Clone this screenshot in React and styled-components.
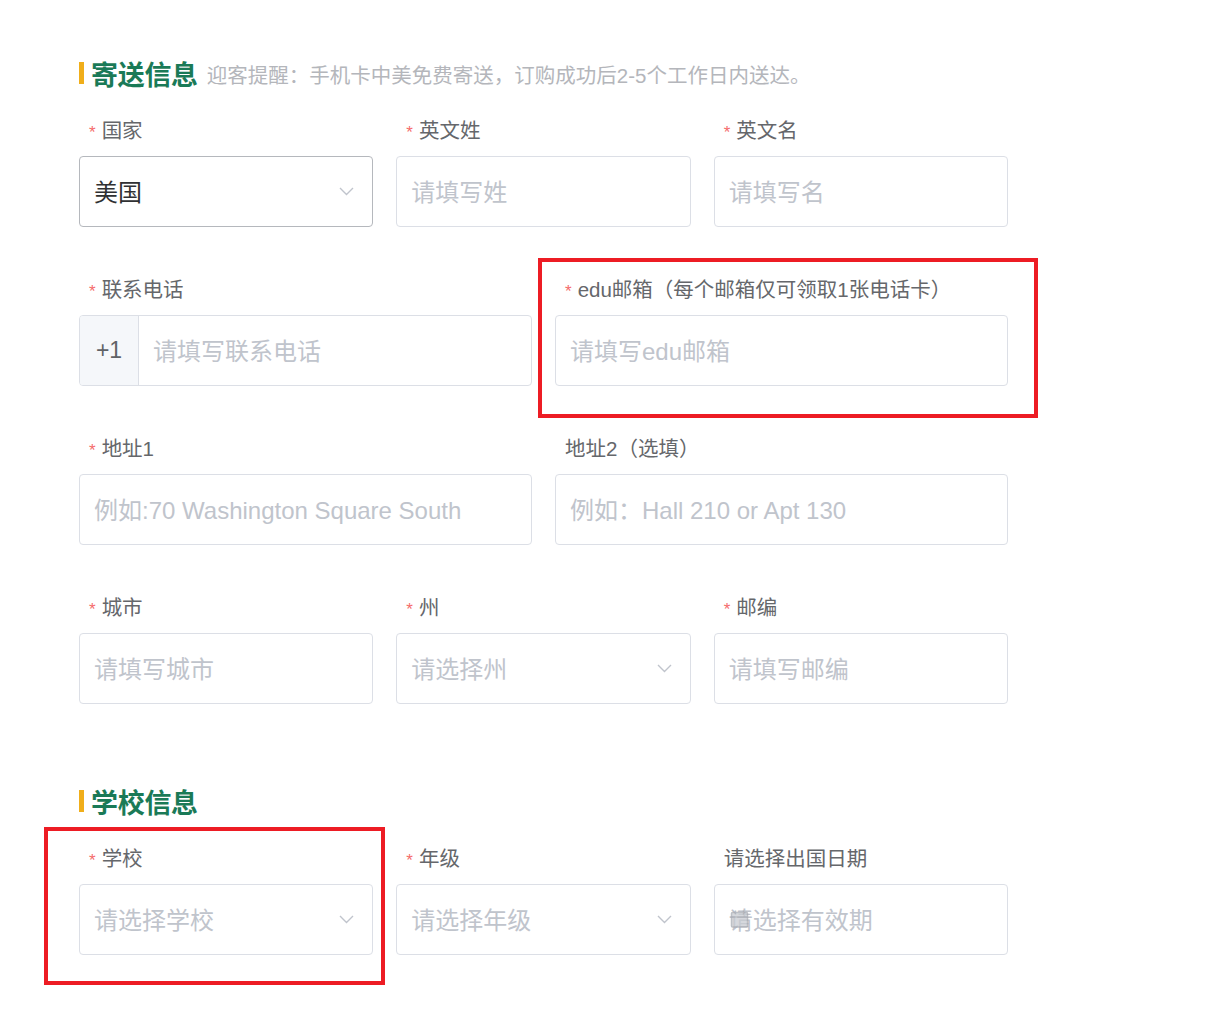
import React from "react"
import styled, { createGlobalStyle } from "styled-components"

const GlobalStyle = createGlobalStyle`
  body {
    margin: 0;
    background: #ffffff;
    font-family: "Liberation Sans", "Noto Sans CJK SC", sans-serif;
  }
`

const Chevron = () => (
  <svg width="15" height="9" viewBox="0 0 15 9" fill="none">
    <path d="M1 1l6.5 6.5L14 1" stroke="#c0c4cc" strokeWidth="1.4" />
  </svg>
)

const CalendarMark = () => (
  <svg width="19" height="19" viewBox="0 0 19 19" fill="none">
    <rect x="1.5" y="3" width="16" height="14.5" rx="1" fill="#c9ccd2" stroke="#a8abb2" strokeWidth="1.5" />
    <path d="M1.5 7.5h16M5.5 1v4M13.5 1v4" stroke="#a8abb2" strokeWidth="1.5" />
  </svg>
)

function Field({ label, required, placeholder, value, select, prefix, focused, date }) {
  return (
    <FieldWrap>
      <Label>
        {required && <Star>*</Star>}
        {label}
      </Label>
      <InputBox $focused={focused}>
        {prefix && <Prefix>{prefix}</Prefix>}
        <InputText $filled={!!value}>
          {date && (
            <DateIcon>
              <CalendarMark />
            </DateIcon>
          )}
          {value || placeholder}
        </InputText>
        {select && (
          <Arrow>
            <Chevron />
          </Arrow>
        )}
      </InputBox>
    </FieldWrap>
  )
}

function App() {
  return (
    <Page>
      <GlobalStyle />
      <Section>
        <Header>
          <Bar />
          <Title>寄送信息</Title>
          <Note>迎客提醒：手机卡中美免费寄送，订购成功后2-5个工作日内送达。</Note>
        </Header>
        <Row $cols={3}>
          <Field required label="国家" value="美国" select focused />
          <Field required label="英文姓" placeholder="请填写姓" />
          <Field required label="英文名" placeholder="请填写名" />
        </Row>
        <Row $cols={2}>
          <Field required label="联系电话" placeholder="请填写联系电话" prefix="+1" />
          <Marked>
            <Field required label="edu邮箱（每个邮箱仅可领取1张电话卡）" placeholder="请填写edu邮箱" />
            <Highlight $top={-18} $left={-17} $right={-30} $bottom={-32} />
          </Marked>
        </Row>
        <Row $cols={2}>
          <Field required label="地址1" placeholder="例如:70 Washington Square South" />
          <Field label="地址2（选填）" placeholder="例如：Hall 210 or Apt 130" />
        </Row>
        <Row $cols={3}>
          <Field required label="城市" placeholder="请填写城市" />
          <Field required label="州" placeholder="请选择州" select />
          <Field required label="邮编" placeholder="请填写邮编" />
        </Row>
      </Section>
      <Section>
        <Header>
          <Bar />
          <Title>学校信息</Title>
        </Header>
        <Row $cols={3}>
          <Marked>
            <Field required label="学校" placeholder="请选择学校" select />
            <Highlight $top={-18} $left={-35} $right={-12} $bottom={-30} />
          </Marked>
          <Field required label="年级" placeholder="请选择年级" select />
          <Field label="请选择出国日期" placeholder="请选择有效期" date />
        </Row>
      </Section>
    </Page>
  )
}

export default App

const Page = styled.div`
  width: 929px;
  padding: 55px 0 40px 79px;
  display: flex;
  flex-direction: column;
  gap: 30px;
`

const Section = styled.section`
  display: flex;
  flex-direction: column;
`

const Header = styled.div`
  display: flex;
  align-items: center;
  height: 36px;
  margin-bottom: 26px;
`

const Bar = styled.span`
  width: 5px;
  height: 22px;
  background: #f0ae1a;
  margin-right: 7px;
`

const Title = styled.h2`
  margin: 0;
  font-size: 27px;
  font-weight: 700;
  color: #1a7a57;
  letter-spacing: -0.3px;
`

const Note = styled.span`
  margin-left: 9px;
  margin-top: 2px;
  font-size: 20.5px;
  color: #b4b6bb;
  white-space: nowrap;
`

const Row = styled.div`
  display: grid;
  grid-template-columns: repeat(${(p) => p.$cols}, 1fr);
  column-gap: 23px;
  margin-bottom: 49px;
`

const FieldWrap = styled.div`
  display: flex;
  flex-direction: column;
`

const Marked = styled.div`
  position: relative;
`

const Highlight = styled.div`
  position: absolute;
  top: ${(p) => p.$top}px;
  left: ${(p) => p.$left}px;
  right: ${(p) => p.$right}px;
  bottom: ${(p) => p.$bottom}px;
  border: 4px solid #ed1c24;
  pointer-events: none;
`

const Label = styled.label`
  height: 28px;
  line-height: 28px;
  padding-left: 10px;
  margin-bottom: 11px;
  font-size: 20.5px;
  color: #65676b;
  white-space: nowrap;
`

const Star = styled.span`
  color: #f56c6c;
  margin-right: 6px;
  font-size: 17px;
`

const InputBox = styled.div`
  position: relative;
  height: 71px;
  box-sizing: border-box;
  border: 1px solid ${(p) => (p.$focused ? "#b5b8bd" : "#dcdfe6")};
  border-radius: 4px;
  display: flex;
  align-items: center;
  background: #fff;
  overflow: hidden;
`

const Prefix = styled.div`
  width: 58px;
  align-self: stretch;
  background: #f5f7fa;
  border-right: 1px solid #dcdfe6;
  display: flex;
  align-items: center;
  justify-content: center;
  font-size: 23px;
  color: #606266;
`

const InputText = styled.div`
  position: relative;
  flex: 1;
  padding: 0 14px;
  margin-top: -3px;
  font-size: 24px;
  color: ${(p) => (p.$filled ? "#303133" : "#c0c4cc")};
  white-space: nowrap;
`

const DateIcon = styled.span`
  position: absolute;
  left: 15px;
  top: 50%;
  transform: translateY(-45%);
  display: flex;
  opacity: 0.75;
`

const Arrow = styled.div`
  display: flex;
  padding-right: 18px;
`
